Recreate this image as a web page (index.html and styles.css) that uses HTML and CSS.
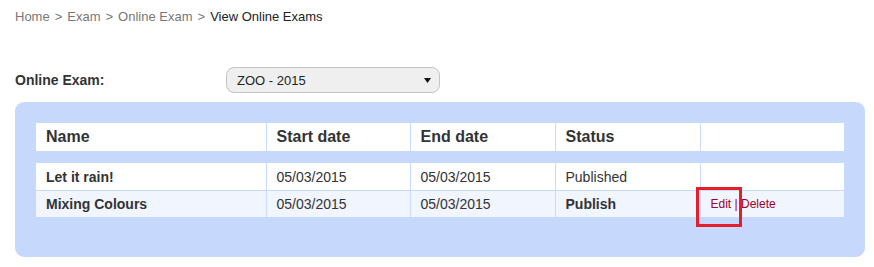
FILE: index.html
```html
<!DOCTYPE html>
<html>
<head>
    <title>View Online Exams</title>
    <link rel="stylesheet" href="styles.css">
</head>
<body>
    <div class="breadcrumb">
        <a href="#">Home</a><span class="sep">&gt;</span><a href="#">Exam</a><span class="sep">&gt;</span><a href="#">Online Exam</a><span class="sep">&gt;</span><span class="current">View Online Exams</span>
    </div>

    <div class="filter">
        <label class="filter-label">Online Exam:</label>
        <div class="select-box">
            <span>ZOO - 2015</span>
            <svg class="caret" width="7" height="5" viewBox="0 0 7 5"><path d="M0 0h7L3.5 5z" fill="#111"/></svg>
        </div>
    </div>

    <div class="panel">
        <table class="exams">
            <colgroup>
                <col style="width:230px">
                <col style="width:144px">
                <col style="width:145px">
                <col style="width:145px">
                <col style="width:144px">
            </colgroup>
            <thead>
                <tr>
                    <th>Name</th>
                    <th>Start date</th>
                    <th>End date</th>
                    <th>Status</th>
                    <th></th>
                </tr>
            </thead>
            <tbody>
                <tr class="spacer"><td colspan="5"></td></tr>
                <tr>
                    <td class="name">Let it rain!</td>
                    <td>05/03/2015</td>
                    <td>05/03/2015</td>
                    <td>Published</td>
                    <td></td>
                </tr>
                <tr class="alt">
                    <td class="name">Mixing Colours</td>
                    <td>05/03/2015</td>
                    <td>05/03/2015</td>
                    <td class="publish">Publish</td>
                    <td class="actions">
                        <div class="action-wrap">
                            <a href="#">Edit</a> | <a href="#">Delete</a>
                            <span class="highlight"></span>
                        </div>
                    </td>
                </tr>
            </tbody>
        </table>
    </div>
</body>
</html>
```

FILE: styles.css
```css
body { margin: 0; font-family: "Liberation Sans", Arial, sans-serif; color: #333; background: #fff; }

.breadcrumb { padding: 9px 15px 7px; font-size: 13px; line-height: 16px; }
.breadcrumb a { color: #777; text-decoration: none; }
.breadcrumb .sep { color: #777; padding: 0 5px; }
.breadcrumb .current { color: #222; }

.filter { display: flex; align-items: center; margin: 35px 0 0 15px; height: 26px; }
.filter-label { width: 211px; font-size: 14px; font-weight: bold; color: #333; }
.select-box {
    width: 214px;
    height: 26px;
    box-sizing: border-box;
    border: 1px solid #c4c4c4;
    border-radius: 8px;
    background: #efefef;
    display: flex;
    align-items: center;
    justify-content: space-between;
    padding: 0 8px 0 10px;
    font-size: 13px;
    color: #222;
}

.panel {
    margin: 9px 9px 0 15px;
    padding: 21px 21px 40px;
    background: #c6d9fd;
    border-radius: 9px;
}

.exams { width: 808px; border-collapse: collapse; table-layout: fixed; }
.exams th, .exams td { padding: 0 10px; text-align: left; border-left: 1px solid #c9dafc; }
.exams th:first-child, .exams td:first-child { border-left: none; }
.exams th { height: 28px; background: #fff; font-size: 16px; font-weight: bold; color: #333; }
.exams td { height: 27px; font-size: 14px; color: #333; background: #fff; border-bottom: 1px solid #c9dafc; }
.exams tr.alt td { background: #f0f5fe; border-bottom: none; height: 26px; }
.exams tr.spacer td { height: 12px; padding: 0; background: transparent; border: none; }
.exams td.name, .exams td.publish { font-weight: bold; }

.actions { font-size: 12px; }
.action-wrap { position: relative; font-size: 12px; color: #a0002a; }
.action-wrap a { color: #a0002a; text-decoration: none; }
.highlight {
    position: absolute;
    left: -15px;
    top: -10px;
    width: 40px;
    height: 34px;
    border: 3px solid #e21f2b;
}
```
